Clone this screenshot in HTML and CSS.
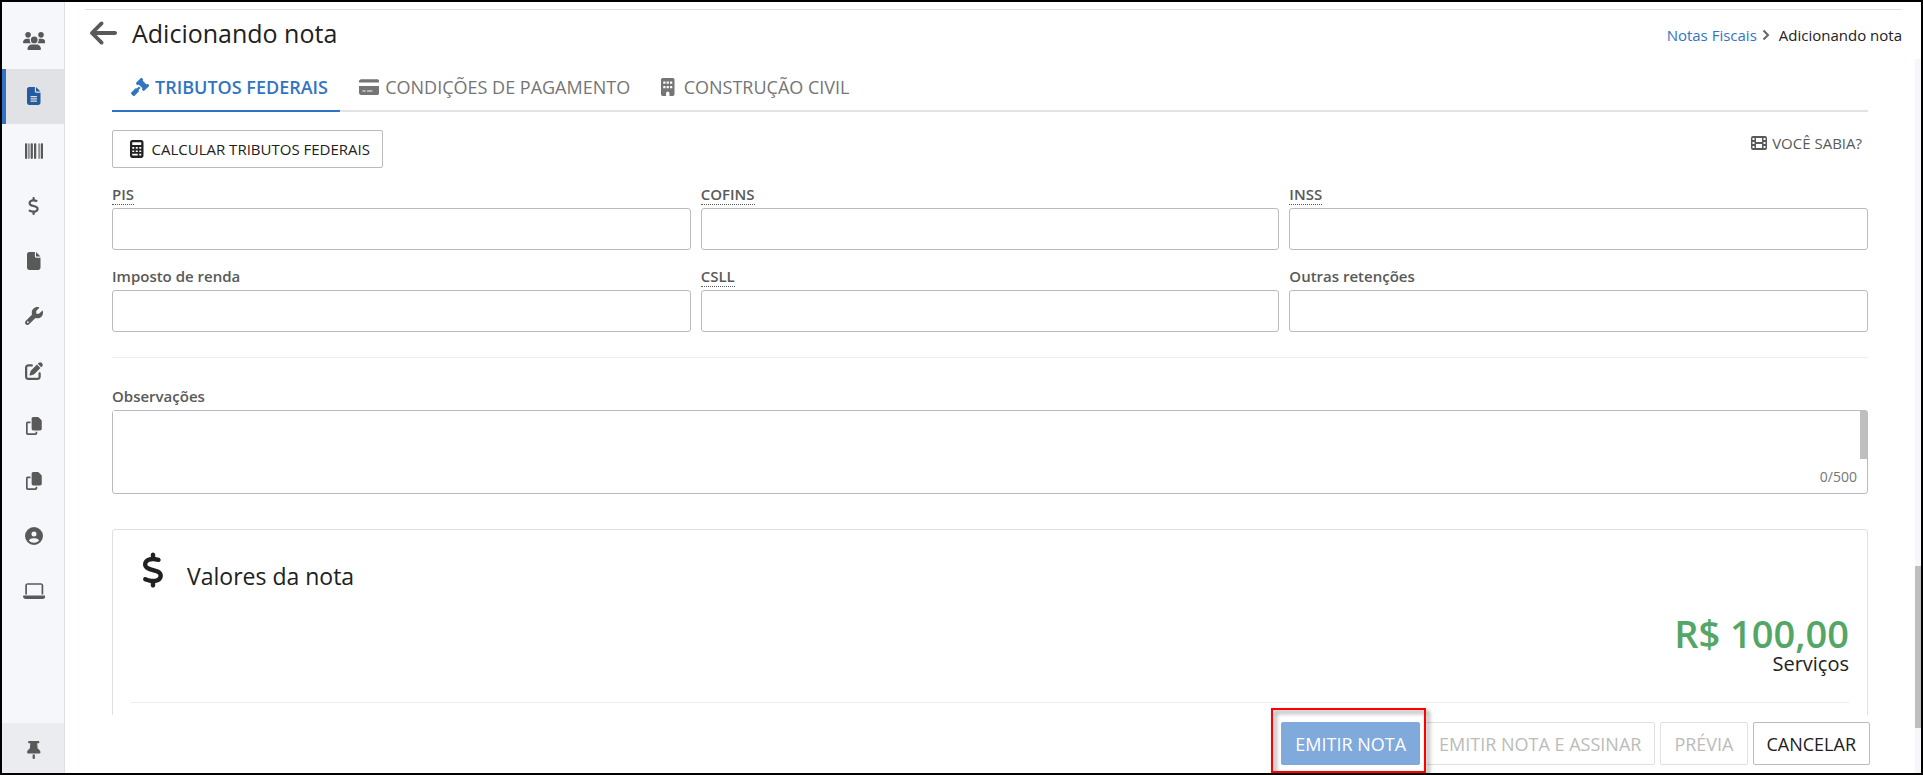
FILE: index.html
```html
<!DOCTYPE html>
<html lang="pt-BR">
<head>
    <meta charset="UTF-8">
    <meta name="viewport" content="width=device-width, initial-scale=1.0">
    <title>Adicionando nota</title>
    <link rel="stylesheet" href="styles.css">
</head>
<body>
    <div class="app">
        <nav class="sidebar" aria-label="Menu principal">
            <a href="#" class="menu-item" aria-label="Clientes">
                <svg class="icon" viewBox="0 0 640 512"><path d="M144 0a80 80 0 1 1 0 160A80 80 0 1 1 144 0zM512 0a80 80 0 1 1 0 160A80 80 0 1 1 512 0zM0 298.7C0 239.8 47.8 192 106.7 192h42.7c15.9 0 31 3.5 44.6 9.7c-1.3 7.2-1.9 14.7-1.9 22.3c0 38.2 16.8 72.5 43.3 96H21.3C9.6 320 0 310.4 0 298.7zM405.3 320h-.7c26.6-23.5 43.3-57.8 43.3-96c0-7.6-.7-15-1.9-22.3c13.6-6.3 28.7-9.7 44.6-9.7h42.7C592.2 192 640 239.8 640 298.7c0 11.8-9.6 21.3-21.3 21.3H405.3zM224 224a96 96 0 1 1 192 0 96 96 0 1 1 -192 0zM128 485.3C128 411.7 187.7 352 261.3 352H378.7C452.3 352 512 411.7 512 485.3c0 14.7-11.9 26.7-26.7 26.7H154.7c-14.7 0-26.7-11.9-26.7-26.7z"/></svg>
            </a>
            <a href="#" class="menu-item active" aria-label="Notas fiscais">
                <svg class="icon" viewBox="0 0 384 512"><path d="M64 0C28.7 0 0 28.7 0 64V448c0 35.3 28.7 64 64 64H320c35.3 0 64-28.7 64-64V160H256c-17.7 0-32-14.3-32-32V0H64zM256 0V128H384L256 0zM112 256H272c8.800 0 16 7.200 16 16s-7.200 16-16 16H112c-8.800 0-16-7.200-16-16s7.200-16 16-16zm0 64H272c8.800 0 16 7.200 16 16s-7.200 16-16 16H112c-8.800 0-16-7.200-16-16s7.200-16 16-16zm0 64H272c8.800 0 16 7.200 16 16s-7.200 16-16 16H112c-8.800 0-16-7.200-16-16s7.200-16 16-16z"/></svg>
            </a>
            <a href="#" class="menu-item" aria-label="Boletos">
                <svg class="icon" viewBox="0 0 512 512"><path d="M24 32C10.700 32 0 42.700 0 56V456c0 13.300 10.700 24 24 24H40c13.300 0 24-10.700 24-24V56c0-13.300-10.700-24-24-24H24zm88 0c-8.800 0-16 7.200-16 16V464c0 8.800 7.200 16 16 16s16-7.200 16-16V48c0-8.800-7.200-16-16-16zm72 0c-13.300 0-24 10.700-24 24V456c0 13.300 10.700 24 24 24h16c13.300 0 24-10.700 24-24V56c0-13.300-10.700-24-24-24H184zm96 0c-13.300 0-24 10.700-24 24V456c0 13.300 10.700 24 24 24h16c13.300 0 24-10.700 24-24V56c0-13.300-10.700-24-24-24H280zM448 56V456c0 13.300 10.700 24 24 24h16c13.300 0 24-10.700 24-24V56c0-13.300-10.700-24-24-24H472c-13.300 0-24 10.700-24 24zm-64-8V464c0 8.800 7.200 16 16 16s16-7.200 16-16V48c0-8.800-7.200-16-16-16s-16 7.200-16 16z"/></svg>
            </a>
            <a href="#" class="menu-item" aria-label="Financeiro">
                <svg class="icon" viewBox="0 0 320 512"><use href="#dollar"/></svg>
            </a>
            <a href="#" class="menu-item" aria-label="Arquivos">
                <svg class="icon" viewBox="0 0 384 512"><path d="M0 64C0 28.7 28.7 0 64 0H224V128c0 17.7 14.3 32 32 32H384V448c0 35.3-28.7 64-64 64H64c-35.3 0-64-28.7-64-64V64zm384 64H256V0L384 128z"/></svg>
            </a>
            <a href="#" class="menu-item" aria-label="Ferramentas">
                <svg class="icon" viewBox="0 0 512 512"><path d="M352 320c88.4 0 160-71.6 160-160c0-15.3-2.2-30.1-6.2-44.2c-3.1-10.8-16.4-13.2-24.3-5.3l-76.8 76.8c-3 3-7.1 4.7-11.3 4.7H336c-8.8 0-16-7.2-16-16V118.6c0-4.2 1.7-8.3 4.7-11.3l76.8-76.8c7.9-7.9 5.4-21.2-5.3-24.3C382.1 2.2 367.3 0 352 0C263.6 0 192 71.6 192 160c0 19.1 3.4 37.5 9.5 54.5L19.9 396.1C7.2 408.8 0 426.1 0 444.1C0 481.6 30.4 512 67.9 512c18 0 35.3-7.2 48-19.9L297.5 310.5c17 6.2 35.4 9.5 54.5 9.5zM80 408a24 24 0 1 1 0 48 24 24 0 1 1 0-48z"/></svg>
            </a>
            <a href="#" class="menu-item" aria-label="Editar">
                <svg class="icon" viewBox="0 0 512 512"><path d="M471.6 21.7c-21.9-21.9-57.3-21.9-79.2 0L362.3 51.7l97.9 97.9 30.1-30.1c21.9-21.9 21.9-57.3 0-79.2L471.6 21.7zm-299.2 220c-6.1 6.1-10.8 13.6-13.5 21.9l-29.6 88.8c-2.9 8.6-.6 18.1 5.8 24.6s15.9 8.7 24.6 5.8l88.8-29.6c8.2-2.7 15.7-7.4 21.9-13.5L437.7 172.3 339.7 74.3 172.4 241.7zM96 64C43 64 0 107 0 160V416c0 53 43 96 96 96H352c53 0 96-43 96-96V320c0-17.7-14.3-32-32-32s-32 14.3-32 32v96c0 17.7-14.3 32-32 32H96c-17.7 0-32-14.3-32-32V160c0-17.7 14.3-32 32-32h96c17.7 0 32-14.3 32-32s-14.3-32-32-32H96z"/></svg>
            </a>
            <a href="#" class="menu-item" aria-label="Modelos">
                <svg class="icon" viewBox="0 0 448 512"><use href="#copy"/></svg>
            </a>
            <a href="#" class="menu-item" aria-label="Lotes">
                <svg class="icon" viewBox="0 0 448 512"><use href="#copy"/></svg>
            </a>
            <a href="#" class="menu-item" aria-label="Minha conta">
                <svg class="icon" viewBox="0 0 512 512"><path d="M399 384.2C376.9 345.8 335.4 320 288 320H224c-47.4 0-88.9 25.8-111 64.2c35.2 39.2 86.2 63.8 143 63.8s107.8-24.7 143-63.8zM0 256a256 256 0 1 1 512 0A256 256 0 1 1 0 256zm256 16a72 72 0 1 0 0-144 72 72 0 1 0 0 144z"/></svg>
            </a>
            <a href="#" class="menu-item" aria-label="Sistema">
                <svg class="icon" viewBox="0 0 640 512"><path d="M128 32C92.700 32 64 60.700 64 96V352h48V80H528V352h48V96c0-35.300-28.700-64-64-64H128zM19.200 384C8.600 384 0 392.600 0 403.200C0 445.600 34.400 480 76.800 480H563.200c42.400 0 76.800-34.400 76.800-76.800c0-10.600-8.600-19.200-19.200-19.200H19.200z"/></svg>
            </a>
            <button type="button" class="pin" aria-label="Fixar menu">
                <svg class="icon" viewBox="0 0 384 512"><path d="M32 32C32 14.3 46.3 0 64 0H320c17.7 0 32 14.3 32 32s-14.3 32-32 32H290.5l11.4 148.2c36.7 19.9 65.7 53.2 79.5 94.7l1 3c3.3 9.8 1.6 20.5-4.4 28.8s-15.7 13.3-26 13.3H32c-10.3 0-19.9-4.9-26-13.3s-7.700-19.100-4.400-28.800l1-3c13.800-41.500 42.800-74.800 79.500-94.700L93.500 64H64C46.300 64 32 49.700 32 32zM160 384h64v96c0 17.700-14.300 32-32 32s-32-14.300-32-32V384z"/></svg>
            </button>
        </nav>

        <div class="page">
            <header class="page-header">
                <div class="title">
                    <a href="#" class="back" aria-label="Voltar">
                        <svg viewBox="0 60 448 392"><path d="M9.4 233.4c-12.5 12.5-12.5 32.8 0 45.3l160 160c12.5 12.5 32.8 12.5 45.3 0s12.5-32.8 0-45.3L109.200 288H416c17.700 0 32-14.300 32-32s-14.300-32-32-32H109.300L214.600 118.600c12.500-12.500 12.500-32.800 0-45.300s-32.800-12.500-45.300 0l-160 160z"/></svg>
                    </a>
                    <h1>Adicionando nota</h1>
                </div>
                <nav class="breadcrumb" aria-label="Navegação">
                    <a href="#">Notas Fiscais</a>
                    <svg viewBox="0 0 8 12"><path d="M1.500 1.500L6 6L1.500 10.500"/></svg>
                    <span>Adicionando nota</span>
                </nav>
            </header>

            <div class="page-body">
                <div class="workspace">
                    <main class="content">
                        <div class="tabs" role="tablist">
                            <button type="button" class="tab active" role="tab" aria-selected="true">
                                <svg class="icon" viewBox="0 0 512 512"><path d="M318.6 9.4c-12.5-12.5-32.8-12.5-45.3 0l-120 120c-12.5 12.5-12.5 32.8 0 45.3l16 16c12.5 12.5 32.8 12.5 45.3 0l4-4L325.400 293.400l-4 4c-12.500 12.500-12.500 32.800 0 45.300l16 16c12.500 12.500 32.800 12.500 45.300 0l120-120c12.500-12.500 12.500-32.800 0-45.300l-16-16c-12.500-12.500-32.800-12.500-45.300 0l-4 4L330.600 74.600l4-4c12.500-12.500 12.500-32.800 0-45.300l-16-16zm-152 288c-12.500-12.500-32.800-12.500-45.300 0l-112 112c-12.500 12.500-12.500 32.800 0 45.300l48 48c12.500 12.500 32.800 12.500 45.300 0l112-112c12.500-12.500 12.500-32.800 0-45.300l-1.400-1.400L272 285.300 226.700 240 168 298.700l-1.400-1.400z"/></svg>
                                TRIBUTOS FEDERAIS
                            </button>
                            <button type="button" class="tab" role="tab" aria-selected="false">
                                <svg class="icon" viewBox="0 0 576 512"><path d="M64 32C28.7 32 0 60.7 0 96v32H576V96c0-35.3-28.7-64-64-64H64zM576 224H0V416c0 35.3 28.7 64 64 64H512c35.3 0 64-28.7 64-64V224zM112 352h64c8.8 0 16 7.2 16 16s-7.2 16-16 16H112c-8.8 0-16-7.2-16-16s7.2-16 16-16zm112 16c0-8.8 7.2-16 16-16H368c8.8 0 16 7.2 16 16s-7.2 16-16 16H240c-8.8 0-16-7.2-16-16z"/></svg>
                                CONDIÇÕES DE PAGAMENTO
                            </button>
                            <button type="button" class="tab tab-wide" role="tab" aria-selected="false">
                                <svg class="icon" viewBox="0 0 384 512"><path fill-rule="evenodd" d="M48 0H336c26 0 48 22 48 48V464c0 26-22 48-48 48H240V432c0-26-22-48-48-48s-48 22-48 48v80H48c-26 0-48-22-48-48V48C0 22 22 0 48 0zM64 96v64h64V96zM160 96v64h64V96zM256 96v64h64V96zM64 224v64h64V224zM160 224v64h64V224zM256 224v64h64V224z"/></svg>
                                CONSTRUÇÃO CIVIL
                            </button>
                        </div>

                        <div class="toolbar">
                            <button type="button" class="btn btn-calc">
                                <svg class="icon" viewBox="0 0 384 512"><path fill-rule="evenodd" d="M64 0H320c35 0 64 29 64 64V448c0 35-29 64-64 64H64c-35 0-64-29-64-64V64C0 29 29 0 64 0zM64 64v80H320V64zM64 200v48h56V200zM164 200v48h56V200zM264 200v48h56V200zM64 296v48h56V296zM164 296v48h56V296zM264 296v48h56V296zM64 392v48h156V392zM264 392v48h56V392z"/></svg>
                                CALCULAR TRIBUTOS FEDERAIS
                            </button>
                            <a href="#" class="help">
                                <svg viewBox="0 0 16 14"><path fill-rule="evenodd" d="M2 0H14a2 2 0 0 1 2 2V12a2 2 0 0 1-2 2H2a2 2 0 0 1-2-2V2A2 2 0 0 1 2 0zM5 2V6H11V2zM5 8V12H11V8zM1.500 2V4H3.500V2zM1.500 6V8H3.500V6zM1.500 10V12H3.500V10zM12.500 2V4H14.500V2zM12.500 6V8H14.500V6zM12.500 10V12H14.500V10z"/></svg>
                                VOCÊ SABIA?
                            </a>
                        </div>

                        <form class="taxes">
                            <div class="field">
                                <label for="pis"><span class="hint">PIS</span></label>
                                <input type="text" id="pis">
                            </div>
                            <div class="field">
                                <label for="cofins"><span class="hint">COFINS</span></label>
                                <input type="text" id="cofins">
                            </div>
                            <div class="field">
                                <label for="inss"><span class="hint">INSS</span></label>
                                <input type="text" id="inss">
                            </div>
                            <div class="field">
                                <label for="ir">Imposto de renda</label>
                                <input type="text" id="ir">
                            </div>
                            <div class="field">
                                <label for="csll"><span class="hint">CSLL</span></label>
                                <input type="text" id="csll">
                            </div>
                            <div class="field">
                                <label for="outras">Outras retenções</label>
                                <input type="text" id="outras">
                            </div>
                        </form>

                        <div class="notes">
                            <label for="obs">Observações</label>
                            <div class="notes-box">
                                <div class="notes-input">
                                    <textarea id="obs" maxlength="500"></textarea>
                                    <span class="notes-scroll"></span>
                                </div>
                                <span class="counter">0/500</span>
                            </div>
                        </div>

                        <section class="card">
                            <div class="card-title">
                                <svg viewBox="0 0 320 512"><path id="dollar" d="M160 0c17.7 0 32 14.3 32 32V67.7c1.6 .2 3.1 .4 4.7 .7c.4 .1 .7 .1 1.1 .2l48 8.8c17.4 3.2 28.9 19.9 25.7 37.2s-19.9 28.9-37.2 25.7l-47.5-8.7c-31.3-4.6-58.9-1.5-78.3 6.2s-27.2 18.3-29 28.1c-2 10.7-.5 16.7 1.2 20.4c1.8 3.9 5.5 8.3 12.8 13.2c16.3 10.7 41.3 17.7 73.7 26.3l2.9 .8c28.6 7.6 63.6 16.8 89.6 33.8c14.2 9.3 27.6 21.9 35.9 39.5c8.5 17.9 10.3 37.9 6.4 59.2c-6.9 38-33.1 63.4-65.6 76.7c-13.7 5.6-28.6 9.2-44.4 11V480c0 17.7-14.3 32-32 32s-32-14.3-32-32V445.1c-.4-.1-.9-.1-1.3-.2l-.2 0c-24.4-3.8-64.5-14.3-91.5-26.3c-16.1-7.2-23.4-26.1-16.2-42.2s26.1-23.4 42.2-16.2c20.9 9.3 55.3 18.5 75.2 21.6c31.9 4.7 58.2 2 76-5.3c16.9-6.9 24.6-16.9 26.8-28.9c1.9-10.6 .4-16.7-1.3-20.4c-1.9-4-5.6-8.4-13-13.3c-16.4-10.7-41.5-17.7-74-26.3l-2.8-.7C119.4 279.3 84.4 270 58.4 253c-14.2-9.3-27.5-22-35.8-39.6c-8.4-17.9-10.1-37.9-6.1-59.2C23.7 116 52.3 91.2 84.8 78.3c13.3-5.3 27.9-8.9 43.200-11V32c0-17.700 14.300-32 32-32z"/></svg>
                                <h2>Valores da nota</h2>
                            </div>
                            <div class="total">
                                <strong>R$ 100,00</strong>
                                <span>Serviços</span>
                            </div>
                        </section>
                    </main>

                    <footer class="actions">
                        <div class="highlight">
                            <button type="button" class="btn btn-primary">EMITIR NOTA</button>
                        </div>
                        <button type="button" class="btn" disabled>EMITIR NOTA E ASSINAR</button>
                        <button type="button" class="btn" disabled>PRÉVIA</button>
                        <button type="button" class="btn">CANCELAR</button>
                    </footer>
                </div>
                <div class="page-scroll"><span></span></div>
            </div>
        </div>
    </div>

    <!-- shared icons -->
    <svg class="sprite" viewBox="0 0 448 512" aria-hidden="true">
        <defs>
            <path id="copy" d="M208 0H332.100c12.700 0 24.900 5.100 33.900 14.100l67.900 67.900c9 9 14.100 21.200 14.100 33.900V336c0 26.500-21.500 48-48 48H208c-26.500 0-48-21.500-48-48V48c0-26.500 21.500-48 48-48zM48 128h80v48H48V464H272V416h48v48c0 26.500-21.500 48-48 48H48c-26.500 0-48-21.500-48-48V176c0-26.500 21.500-48 48-48z"/>
        </defs>
    </svg>
</body>
</html>
```
FILE: styles.css
```css
* {
    box-sizing: border-box;
}

body {
    margin: 0;
    font-family: "Open Sans", sans-serif;
    font-size: 15px;
    line-height: 20px;
    color: #212121;
    background: #fff;
}

button, input, textarea {
    font-family: inherit;
}

a {
    color: #3274c1;
    text-decoration: none;
}

svg {
    fill: currentColor;
    flex-shrink: 0;
}

.sprite {
    display: none;
}

.icon {
    height: 18px;
}

.app {
    display: flex;
    height: 100vh;
    border: 2px solid #000;
    overflow: hidden;
}

/* sidebar */
.sidebar {
    display: flex;
    flex-direction: column;
    width: 63px;
    padding-top: 12px;
    background: #f6f7fb;
    border-right: 1px solid #dedfe3;
}

.menu-item {
    display: flex;
    align-items: center;
    justify-content: center;
    height: 55px;
    padding: 0 0 2px 2px;
    color: #595959;
}

.menu-item.active {
    padding: 0 2px 2px 0;
    color: #255ca0;
    background: #e1e2e6;
    border-left: 4px solid #2f73c4;
}

.pin {
    display: flex;
    align-items: center;
    justify-content: center;
    height: 50px;
    margin-top: auto;
    padding: 4px 0 0 2px;
    color: #595959;
    background: #ebecf0;
    border: none;
}

/* header */
.page {
    display: flex;
    flex: 1;
    flex-direction: column;
    min-width: 0;
}

.page-header {
    display: flex;
    justify-content: space-between;
    height: 50px;
    margin: 7px 19px 0 20px;
    padding: 7px 0 0 5px;
    border-top: 1px solid #dedfe3;
}

.title {
    display: flex;
    align-items: flex-start;
    gap: 15px;
}

.back {
    color: #595959;
}

.back svg {
    display: block;
    width: 27px;
    height: 24px;
    margin-top: 4px;
}

h1 {
    margin: 0;
    font-size: 25px;
    font-weight: 400;
    line-height: 32px;
}

.breadcrumb {
    display: flex;
    align-items: center;
    height: 36px;
    gap: 5px;
}

.breadcrumb svg {
    width: 8px;
    height: 12px;
    margin-right: 4px;
    fill: none;
    stroke: #666;
    stroke-width: 2;
}

.page-body {
    display: flex;
    flex: 1;
    min-height: 0;
}

.workspace {
    display: flex;
    flex: 1;
    flex-direction: column;
    min-width: 0;
}

.page-scroll {
    display: flex;
    flex-direction: column;
    justify-content: flex-end;
    width: 6px;
    padding-bottom: 45px;
    background: #f6f7fb;
}

.page-scroll span {
    height: 162px;
    background: #bfbfbf;
}

.content {
    flex: 1;
    min-height: 0;
    padding: 0 47px;
    overflow: hidden;
}

/* tabs */
.tabs {
    display: flex;
    border-bottom: 2px solid #e1e1e6;
}

.tab {
    display: flex;
    align-items: center;
    gap: 6px;
    height: 53px;
    margin-bottom: -2px;
    padding: 5px 12px 0 19px;
    font-size: 18px;
    color: #757575;
    background: none;
    border: none;
    border-bottom: 2px solid transparent;
}

.tab-wide {
    gap: 9px;
}

.tab.active {
    font-weight: 600;
    color: #3274c1;
    border-bottom-color: #2f73c4;
}

.toolbar {
    display: flex;
    align-items: flex-start;
    justify-content: space-between;
    margin-top: 18px;
}

.btn {
    height: 43px;
    padding: 0 13px;
    font-size: 18px;
    color: #212121;
    background: #fff;
    border: 1px solid #bbb;
    border-radius: 2px;
}

.btn:disabled {
    color: #bbb;
    border-color: #e0e0e0;
}

.btn-calc {
    display: flex;
    align-items: center;
    gap: 8px;
    height: 38px;
    padding: 0 12px 0 17px;
    font-size: 15px;
}

.help {
    display: flex;
    align-items: center;
    gap: 5px;
    padding: 3px 6px;
    color: #595959;
}

.help svg {
    width: 16px;
    height: 14px;
}

/* form */
.taxes {
    display: grid;
    grid-template-columns: repeat(3, 1fr);
    gap: 16px 10px;
    margin-top: 16px;
    padding-bottom: 25px;
    border-bottom: 1px solid #ededed;
}

label {
    display: block;
    height: 24px;
    font-weight: 600;
    line-height: 20px;
    color: #595959;
}

.hint {
    display: inline-block;
    border-bottom: 1px dotted #595959;
}

input {
    display: block;
    width: 100%;
    height: 42px;
    padding: 0 10px;
    font-size: 15px;
    border: 1px solid #bbb;
    border-radius: 3px;
}

.notes {
    margin-top: 28px;
}

.notes-box {
    border: 1px solid #bbb;
    border-radius: 3px;
}

.notes-input {
    display: flex;
    height: 50px;
}

textarea {
    flex: 1;
    padding: 8px 10px;
    font-size: 15px;
    border: none;
    outline: none;
    resize: none;
}

.notes-scroll {
    width: 7px;
    height: 48px;
    background: #bfbfbf;
}

.counter {
    display: block;
    height: 32px;
    padding: 6px 10px 0 0;
    font-size: 14px;
    text-align: right;
    color: #757575;
}

/* totals */
.card {
    margin-top: 35px;
    padding: 18px 18px 40px;
    border: 1px solid #e0e0e0;
    border-radius: 3px;
}

.card-title {
    display: flex;
    align-items: flex-start;
    gap: 23px;
    padding-left: 11px;
}

.card-title svg {
    width: 22px;
    height: 36px;
    margin-top: 4px;
}

h2 {
    margin: 12px 0 0;
    font-size: 23px;
    font-weight: 400;
    line-height: 32px;
}

.total {
    display: flex;
    flex-direction: column;
    align-items: flex-end;
    margin-top: 20px;
    padding-bottom: 28px;
    border-bottom: 1px solid #ededed;
}

.total strong {
    font-size: 38px;
    font-weight: 600;
    line-height: 42px;
    color: #54a667;
}

.total span {
    font-size: 20px;
    line-height: 20px;
}

/* footer */
.actions {
    display: flex;
    justify-content: flex-end;
    height: 58px;
    gap: 5px;
    padding: 7px 45px 0;
}

.highlight {
    position: relative;
}

.highlight::after {
    content: "";
    position: absolute;
    top: -14px;
    right: -6px;
    bottom: 0;
    left: -10px;
    border: 2px solid #f00;
    filter: drop-shadow(3px 3px 2px rgba(0, 0, 0, 0.5));
    pointer-events: none;
}

.btn-primary {
    color: #fff;
    background: #80aadc;
    border-color: #80aadc;
}
```
